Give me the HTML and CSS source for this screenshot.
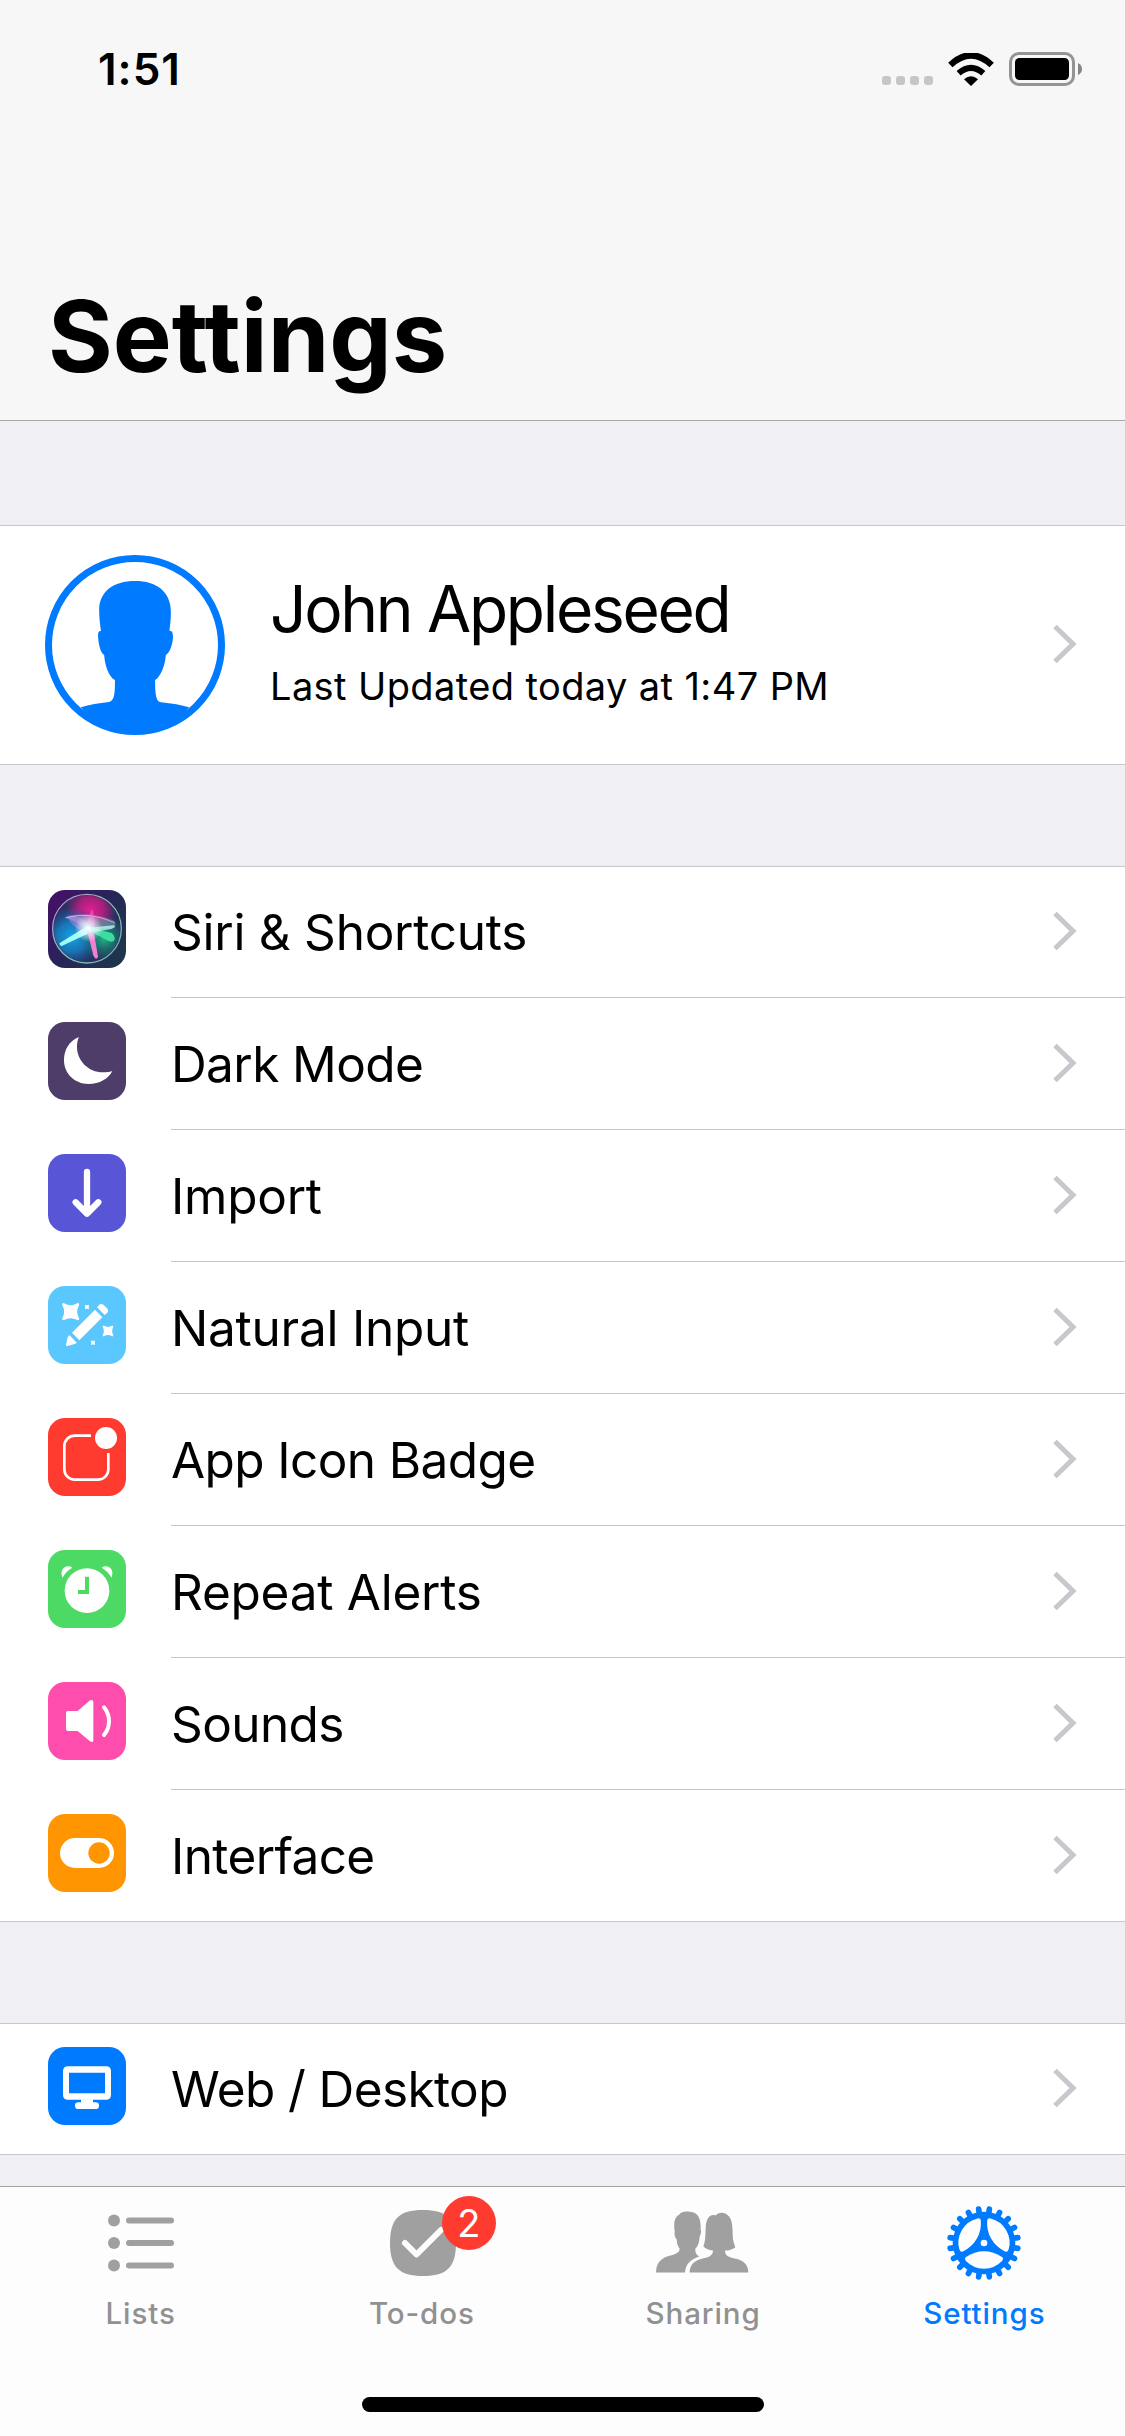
FILE: index.html
```html
<!DOCTYPE html>
<html lang="en">
<head>
  <meta charset="UTF-8">
  <title>Settings</title>
  <link rel="stylesheet" href="styles.css">
</head>
<body>

  <!-- shared shapes -->
  <svg class="defs" width="0" height="0">
    <symbol id="chevron" viewBox="0 0 24 40">
      <path d="M2 2.500L20 20L2 37.500" fill="none" stroke="#c7c7cc" stroke-width="5"/>
    </symbol>
    <symbol id="star" viewBox="-10 -10 20 20">
      <path d="M-8 -8Q0 -3.500 8 -8Q3.500 0 8 8Q0 3.500 -8 8Q-3.500 0 -8 -8Z" fill="#fff" stroke="#fff" stroke-width="3" stroke-linejoin="round"/>
    </symbol>
  </svg>

  <div class="phone">
    <header class="header">
      <div class="status">
        <span class="time">1:51</span>
        <div class="status-icons">
          <div class="dots"><i></i><i></i><i></i><i></i></div>
          <svg class="wifi" viewBox="0 0 138 99">
            <path d="M7 36Q69 -22 131 36" fill="none" stroke="#000" stroke-width="19"/>
            <path d="M32 61Q69 28 106 61" fill="none" stroke="#000" stroke-width="18"/>
            <path d="M48 79Q69 60 90 79L69 99Z"/>
          </svg>
          <svg class="battery" viewBox="0 0 74 34">
            <rect x="1.500" y="1.500" width="63" height="31" rx="8.500" fill="none" stroke="#949494" stroke-width="3"/>
            <rect x="6" y="6" width="54" height="22" rx="4.500"/>
            <path d="M69 11Q73 13 73 17T69 23Z" fill="#858585"/>
          </svg>
        </div>
      </div>
      <h1>Settings</h1>
    </header>

    <main class="content">
      <section class="group profile">
        <svg class="avatar" viewBox="0 0 180 180" fill="#007aff">
          <circle cx="90" cy="90" r="86.500" fill="none" stroke="#007aff" stroke-width="7"/>
          <path transform="scale(.3586 .3333) translate(-125 -165)" d="M376 243C436 243 476 275 476 335C476 360 474 375 472 392C480 391 482 400 482 412C480 435 474 458 462 465C460 495 448 530 432 540C432 580 434 605 448 607C480 610 505 615 527 622Q470 700 376 700Q282 700 225 622C250 614 275 609 303 606C320 603 320 575 320 540C302 530 292 495 290 465C280 460 273 430 273 405C273 395 276 392 281 393C278 370 276 350 276 330C276 275 316 243 376 243Z"/>
        </svg>
        <div class="profile-text">
          <div class="name">John Appleseed</div>
          <div class="updated">Last Updated today at 1:47 PM</div>
        </div>
        <svg class="chevron"><use href="#chevron"/></svg>
      </section>

      <section class="group">
        <div class="row">
          <svg class="icon siri" viewBox="0 0 234 234">
            <defs>
              <linearGradient id="siriBg" x1="0" y1="0" x2="1" y2=".7">
                <stop offset="0" stop-color="#4a0d68"/>
                <stop offset=".5" stop-color="#28235a"/>
                <stop offset="1" stop-color="#1f354c"/>
              </linearGradient>
              <linearGradient id="siriRing" x1="0" y1="0" x2="1" y2="1">
                <stop offset="0" stop-color="#c08ad0"/>
                <stop offset=".6" stop-color="#7fc7b4"/>
                <stop offset="1" stop-color="#7098c0"/>
              </linearGradient>
              <radialGradient id="siriPink"><stop offset="0" stop-color="#e0209a"/><stop offset=".5" stop-color="#c81c80" stop-opacity=".8"/><stop offset="1" stop-color="#c01880" stop-opacity="0"/></radialGradient>
              <radialGradient id="siriBlue"><stop offset="0" stop-color="#12a4ec"/><stop offset=".5" stop-color="#1486c8" stop-opacity=".8"/><stop offset="1" stop-color="#1060b0" stop-opacity="0"/></radialGradient>
              <radialGradient id="siriGreen"><stop offset="0" stop-color="#20b880"/><stop offset=".5" stop-color="#188070" stop-opacity=".7"/><stop offset="1" stop-color="#108060" stop-opacity="0"/></radialGradient>
              <radialGradient id="siriGlow"><stop offset="0" stop-color="#fff"/><stop offset=".3" stop-color="#e8f8ff" stop-opacity=".8"/><stop offset="1" stop-color="#fff" stop-opacity="0"/></radialGradient>
              <clipPath id="siriClip"><circle cx="117" cy="116" r="100"/></clipPath>
            </defs>
            <rect width="234" height="234" fill="url(#siriBg)"/>
            <g clip-path="url(#siriClip)">
              <circle cx="117" cy="116" r="102" fill="#2a3060"/>
              <circle cx="128" cy="62" r="76" fill="url(#siriPink)"/>
              <circle cx="72" cy="140" r="90" fill="url(#siriBlue)"/>
              <circle cx="168" cy="145" r="68" fill="url(#siriGreen)"/>
              <path d="M56 78Q90 70 124 104L110 128Q70 110 56 78Z" fill="#c77be0" opacity=".5"/>
              <path d="M50 82Q115 60 198 92Q212 110 190 112Q150 120 112 118Q90 96 50 82Z" fill="#b9c0ea" opacity=".35"/>
              <path d="M52 84Q120 62 200 98" fill="none" stroke="#d8d0f0" stroke-width="3" opacity=".65"/>
              <path d="M132 56Q148 100 134 132L108 122Z" fill="#f06ac8" opacity=".6"/>
              <path d="M118 108L34 160Q36 172 46 166L130 126Z" fill="#a0fcf4"/>
              <path d="M116 116L136 196Q144 214 150 200L136 118Z" fill="#f080d4"/>
              <path d="M130 112L192 130Q206 146 196 154Q186 158 172 148L126 124Z" fill="#3fdca0"/>
              <path d="M110 114L198 106Q206 112 190 117L126 128Z" fill="#b8f6f0" opacity=".8"/>
              <circle cx="121" cy="114" r="42" fill="url(#siriGlow)"/>
            </g>
            <circle cx="117" cy="116" r="103" fill="none" stroke="url(#siriRing)" stroke-width="4"/>
          </svg>
          <div class="row-body wide"><span>Siri &amp; Shortcuts</span><svg class="chevron"><use href="#chevron"/></svg></div>
        </div>

        <div class="row">
          <svg class="icon dark" viewBox="0 0 234 234" fill="#fff">
            <path d="M93 45C62 57 48 85 48 115C48 155 80 186 121 186C155 186 182 170 193 147C184 150 175 151 165 151C120 151 87 115 87 75C87 63 89 53 93 45Z"/>
          </svg>
          <div class="row-body"><span>Dark Mode</span><svg class="chevron"><use href="#chevron"/></svg></div>
        </div>

        <div class="row">
          <svg class="icon import" viewBox="0 0 234 234">
            <path d="M117 54V176M83 145L117 179L151 145" fill="none" stroke="#fff" stroke-width="19" stroke-linecap="round" stroke-linejoin="round"/>
          </svg>
          <div class="row-body wide"><span>Import</span><svg class="chevron"><use href="#chevron"/></svg></div>
        </div>

        <div class="row">
          <svg class="icon natural" viewBox="0 0 234 234" fill="#fff">
            <path d="M72 140L141 71L163 94L94 163Z"/>
            <path d="M65 148L86 170Q84 173 80 174L58 180Q53 181 54 176L59 154Q61 149 65 148Z"/>
            <path d="M147 64L154 56Q160 51 167 57L177 67Q183 75 177 81L170 87Z"/>
            <use href="#star" x="41" y="50" width="54" height="54"/>
            <use href="#star" x="110" y="56" width="14" height="14"/>
            <use href="#star" x="163" y="118" width="34" height="34"/>
            <use href="#star" x="128" y="163" width="14" height="14"/>
          </svg>
          <div class="row-body wide"><span>Natural Input</span><svg class="chevron"><use href="#chevron"/></svg></div>
        </div>

        <div class="row">
          <svg class="icon app-badge" viewBox="0 0 234 234">
            <path d="M129 53H80A31 31 0 0 0 49 84V154A31 31 0 0 0 80 185H150A31 31 0 0 0 181 154V105" fill="none" stroke="#fff" stroke-width="8"/>
            <circle cx="174" cy="60" r="33" fill="#fff"/>
          </svg>
          <div class="row-body"><span>App Icon Badge</span><svg class="chevron"><use href="#chevron"/></svg></div>
        </div>

        <div class="row">
          <svg class="icon alerts" viewBox="0 0 234 234" fill="#fff">
            <circle cx="117" cy="122" r="67"/>
            <path d="M44 83C35 66 45 49 61 49Q68 49 73 53Q54 63 44 83Z"/>
            <path d="M190 83C199 66 189 49 173 49Q166 49 161 53Q180 63 190 83Z"/>
            <path d="M117 80V126H90" fill="none" stroke="#4cd964" stroke-width="12"/>
          </svg>
          <div class="row-body wide"><span>Repeat Alerts</span><svg class="chevron"><use href="#chevron"/></svg></div>
        </div>

        <div class="row">
          <svg class="icon sounds" viewBox="0 0 234 234" fill="#fff">
            <path d="M54 93Q54 87 60 87H89L126 55Q136 51 136 60V175Q136 183 126 178L89 147H60Q54 147 54 141Z"/>
            <path d="M168 76C188 100 188 135 168 159" fill="none" stroke="#fff" stroke-width="12" stroke-linecap="round"/>
          </svg>
          <div class="row-body"><span>Sounds</span><svg class="chevron"><use href="#chevron"/></svg></div>
        </div>

        <div class="row">
          <svg class="icon interface" viewBox="0 0 234 234">
            <rect x="36" y="72" width="162" height="90" rx="45" fill="#fff"/>
            <circle cx="153" cy="117" r="32" fill="#ff9500"/>
          </svg>
          <div class="row-body"><span>Interface</span><svg class="chevron"><use href="#chevron"/></svg></div>
        </div>
      </section>

      <section class="group">
        <div class="row">
          <svg class="icon web" viewBox="0 0 234 234" fill="#fff">
            <path fill-rule="evenodd" d="M60 58H174Q189 58 189 73V143Q189 158 174 158H60Q45 158 45 143V73Q45 58 60 58ZM63 77V139H171V77Z"/>
            <rect x="99" y="157" width="36" height="14"/>
            <rect x="81" y="166" width="72" height="20" rx="10"/>
          </svg>
          <div class="row-body"><span>Web / Desktop</span><svg class="chevron"><use href="#chevron"/></svg></div>
        </div>
      </section>
    </main>

    <nav class="tabbar">
      <div class="tab">
        <svg class="tab-icon" viewBox="0 0 114 80">
          <g fill="#a0a0a0">
            <circle cx="30" cy="17.500" r="6"/><circle cx="30" cy="40" r="6"/><circle cx="30" cy="62.500" r="6"/>
            <rect x="42" y="14.500" width="48" height="6" rx="3"/><rect x="42" y="37" width="48" height="6" rx="3"/><rect x="42" y="59.500" width="48" height="6" rx="3"/>
          </g>
        </svg>
        <span>Lists</span>
      </div>
      <div class="tab">
        <svg class="tab-icon" viewBox="0 0 114 80">
          <path d="M58 7C82 7 91 16 91 40S82 73 58 73S25 64 25 40S34 7 58 7Z" fill="#a0a0a0"/>
          <path d="M40 40L51.500 51.500L76 27" fill="none" stroke="#fdfdfd" stroke-width="6" stroke-linecap="round" stroke-linejoin="round"/>
        </svg>
        <b class="count">2</b>
        <span>To-dos</span>
      </div>
      <div class="tab">
        <svg class="tab-icon" viewBox="0 0 114 80">
          <g fill="#a0a0a0" transform="translate(10 8.500) scale(.3333) translate(-168 -126)">
            <path d="M168 309C168 275 190 262 215 257C235 252 238 246 239 238C233 230 231 222 230 210C224 203 223 195 224 186C221 160 222 145 238 135C245 124 260 125 270 127C295 128 303 148 302 180C305 185 303 195 299 200C298 215 296 228 286 238C285 248 288 256 298 261C275 268 257 282 255 309Z"/>
            <path d="M269 309C269 285 285 273 305 268C330 262 338 258 339 243C325 241 315 237 310 230C317 215 316 195 317 175C318 150 328 132 347 138C355 128 375 125 388 142C402 160 395 195 401 218L406 233C397 240 388 243 375 243C375 258 385 263 408 268C430 274 445 285 445 309Z"/>
          </g>
        </svg>
        <span>Sharing</span>
      </div>
      <div class="tab active">
        <svg class="tab-icon" viewBox="-171 -120 342 240">
          <defs>
            <path id="teeth" d="M13.800 86.900L16 101.500M40 78.400L46.700 91.500M62.200 62.200L72.600 72.600M78.400 40L91.500 46.700M86.900 13.800L101.500 16" stroke="#007aff" stroke-width="17" stroke-linecap="round"/>
            <path id="hole" d="M-54 42Q-28 25 0 25T54 42Q60 47 54 54Q32 77 0 77T-54 54Q-60 47 -54 42Z" fill="#fdfdfd"/>
          </defs>
          <circle r="94" fill="#007aff"/>
          <use href="#teeth"/><use href="#teeth" transform="rotate(90)"/><use href="#teeth" transform="rotate(180)"/><use href="#teeth" transform="rotate(270)"/>
          <use href="#hole"/><use href="#hole" transform="rotate(120)"/><use href="#hole" transform="rotate(240)"/>
          <circle r="10" fill="#fdfdfd"/>
        </svg>
        <span>Settings</span>
      </div>
      <div class="home-bar"></div>
    </nav>
  </div>

</body>
</html>
```
FILE: styles.css
```css
:root {
  --bg: #efeff4;
  --line: #c8c7cc;
  --blue: #007aff;
}
* {
  box-sizing: border-box;
}
body {
  margin: 0;
  font-family: Inter, "Liberation Sans", sans-serif;
  color: #000;
  background: var(--bg);
}
.defs {
  position: absolute;
}
.phone {
  display: flex;
  flex-direction: column;
  width: 1125px;
  height: 2436px;
  overflow: hidden;
}

/* header */
.header {
  display: flex;
  flex-direction: column;
  justify-content: space-between;
  height: 421px;
  padding-bottom: 24px;
  background: #f7f7f7;
  border-bottom: 1px solid #a8a8ab;
}
.status {
  display: flex;
  justify-content: space-between;
  align-items: center;
  height: 138px;
  padding: 0 42px 0 98px;
}
.time {
  font-size: 44px;
  font-weight: 600;
  letter-spacing: 1px;
}
.status-icons {
  display: flex;
  align-items: center;
}
.dots {
  display: flex;
  gap: 5px;
  margin: 23px 15px 0 0;
}
.dots i {
  width: 9px; height: 9px;
  border-radius: 3px;
  background: #c6c6c6;
}
.wifi {
  width: 46px; height: 33px;
  margin-right: 15px;
}
.battery {
  width: 74px; height: 34px;
}
h1 {
  margin: 0;
  padding-left: 48px;
  font-size: 99px;
  line-height: 120px;
  font-weight: 700;
}

/* lists */
.content {
  flex: 1;
  padding-top: 104px;
  overflow: hidden;
}
.group {
  margin-bottom: 101px;
  background: #fff;
  box-shadow: inset 0 1px var(--line), inset 0 -1px var(--line);
}
.profile {
  display: flex;
  height: 240px;
  padding: 30px 48px 0 45px;
}
.avatar {
  width: 180px; height: 180px;
  margin-right: 45px;
}
.profile-text {
  flex: 1;
  padding-top: 14px;
}
.name {
  font-size: 64px;
  line-height: 80px;
  letter-spacing: -2.3px;
}
.updated {
  margin-top: 12px;
  font-size: 38px;
  line-height: 50px;
  letter-spacing: 0.4px;
}
.row {
  display: flex;
  align-items: center;
  height: 132px;
  padding-left: 48px;
}
.icon {
  width: 78px; height: 78px;
  margin: 0 45px 6px 0;
  border-radius: 17px;
}
.row-body {
  flex: 1;
  display: flex;
  justify-content: space-between;
  align-items: center;
  height: 132px;
  padding: 1px 48px 0 0;
  border-bottom: 1px solid var(--line);
  font-size: 49.5px;
  letter-spacing: -0.6px;
}
.row-body.wide {
  letter-spacing: -0.25px;
}
.row:last-child .row-body {
  border-bottom-color: transparent;
}
.chevron {
  width: 24px; height: 40px;
  margin-bottom: 3px;
}
.profile .chevron {
  margin-top: 69px;
}
.dark { background: #4e3d68; }
.import { background: #5856d6; }
.natural { background: #5ac8fe; }
.app-badge { background: #ff3b30; }
.alerts { background: #4cd964; }
.sounds { background: #ff4dae; }
.interface { background: #ff9500; }
.web { background: var(--blue); }

/* tab bar */
.tabbar {
  position: relative;
  display: grid;
  grid-template-columns: repeat(4, 1fr);
  height: 250px;
  padding-top: 16px;
  background: #fdfdfd;
  border-top: 1px solid #a3a3a6;
}
.tab {
  position: relative;
  display: flex;
  flex-direction: column;
  align-items: center;
  color: #919191;
  font-size: 29.5px;
  line-height: 40px;
  font-weight: 450;
  letter-spacing: 0.9px;
}
.tab.active {
  color: var(--blue);
}
.tab-icon {
  width: 114px; height: 80px;
  margin-bottom: 10px;
}
.count {
  position: absolute;
  left: 161px; top: -7px;
  width: 54px; height: 54px;
  border-radius: 50%;
  background: #ff3b30;
  color: #fff;
  font-size: 38px;
  line-height: 54px;
  font-weight: 400;
  text-align: center;
}
.home-bar {
  position: absolute;
  left: 362px; bottom: 24px;
  width: 402px; height: 15px;
  border-radius: 8px;
  background: #000;
}
```
